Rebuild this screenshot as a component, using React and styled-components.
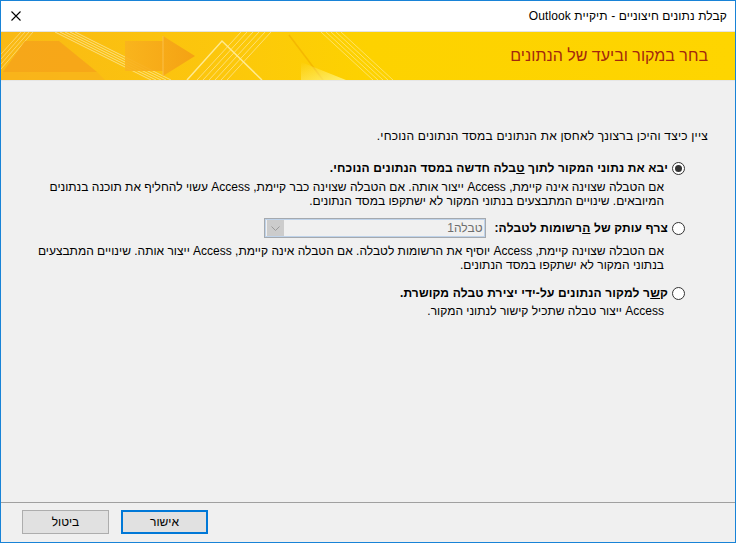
import React from 'react';
import styled, { createGlobalStyle } from 'styled-components';

const Global = createGlobalStyle`
  html, body { margin: 0; padding: 0; background: #f0f0f0; overflow: hidden; }
  body { font-family: "Liberation Sans", "DejaVu Sans", Arial, sans-serif; }
`;

const FONT = `"Liberation Sans", "DejaVu Sans", Arial, sans-serif`;

const Window = styled.div`
  width: 736px;
  height: 543px;
  box-sizing: border-box;
  border: 1px solid #1883d7;
  display: flex;
  flex-direction: column;
  background: #f0f0f0;
  direction: rtl;
  font-family: ${FONT};
  font-size: 12px;
  color: #000;
  overflow: hidden;
`;

const TitleBar = styled.div`
  height: 30px;
  flex-shrink: 0;
  background: #fff;
  display: flex;
  align-items: center;
  justify-content: space-between;
  padding: 0 8px 1px 10px;
  box-sizing: border-box;
`;

const TitleText = styled.span`
  font-size: 12px;
  color: #000;
  white-space: nowrap;
  letter-spacing: 0.1px;
`;

const CloseBtn = styled.span`
  display: flex;
  width: 10px;
  height: 10px;
`;

const Banner = styled.div`
  position: relative;
  height: 48px;
  flex-shrink: 0;
  border-top: 1px solid #e4e4e4;
  border-bottom: 1px solid #e6e6e6;
  display: flex;
  align-items: center;
  padding-right: 27px;
  overflow: hidden;
  background: #fdd300;
`;

const BannerArt = styled.svg`
  position: absolute;
  inset: 0;
  width: 100%;
  height: 100%;
`;

const BannerTitle = styled.h1`
  position: relative;
  margin: 0;
  font-size: 16px;
  font-weight: normal;
  color: #a3280d;
  white-space: nowrap;
`;

const Body = styled.div`
  flex: 1;
  padding: 48px 27px 0 0;
`;

const Line = styled.div`
  line-height: 14px;
  white-space: nowrap;
  letter-spacing: ${p => p.$ls || 0}px;
`;

const Options = styled.div`
  margin-top: 15px;
  padding-right: 23px;
  display: flex;
  flex-direction: column;
`;

const Option = styled.div`
  margin-top: ${p => p.$gap || 0}px;
`;

const Row = styled.div`
  display: flex;
  align-items: center;
  min-height: 20px;
  gap: 4px;
`;

const Radio = styled.span`
  width: 13px;
  height: 13px;
  box-sizing: border-box;
  border: 1px solid #333;
  border-radius: 50%;
  background: #fff;
  display: grid;
  place-items: center;
  flex-shrink: 0;
  &::after {
    content: '';
    width: 7px;
    height: 7px;
    border-radius: 50%;
    background: ${p => (p.$checked ? '#333' : 'transparent')};
  }
`;

const Label = styled.span`
  font-weight: bold;
  white-space: nowrap;
  line-height: 14px;
  letter-spacing: 0.15px;
`;

const Accel = styled.u`
  text-decoration: underline;
`;

const Desc = styled.div`
  margin-top: ${p => p.$top || 0}px;
  margin-right: 21px;
`;

const Combo = styled.div`
  margin-right: 4px;
  width: 222px;
  height: 20px;
  box-sizing: border-box;
  border: 1px solid #a5a9ae;
  box-shadow: inset 0 0 0 1px #bfd3ea;
  background: #f0f0f0;
  display: flex;
  align-items: center;
  padding: 1px 3px 1px 2px;
`;

const ComboText = styled.span`
  flex: 1;
  color: #6d6d6d;
  white-space: nowrap;
`;

const ComboBtn = styled.span`
  width: 17px;
  height: 16px;
  background: #cccccc;
  display: grid;
  place-items: center;
`;

const Footer = styled.div`
  flex-shrink: 0;
  border-top: 1px solid #a0a0a0;
  padding: 7px 21px 8px;
  display: flex;
  justify-content: flex-end;
  gap: 12px;
`;

const Button = styled.button`
  width: 87px;
  height: 24px;
  box-sizing: border-box;
  background: #e1e1e1;
  border: ${p => (p.$primary ? '2px solid #0078d7' : '1px solid #adadad')};
  font-family: ${FONT};
  font-size: 12px;
  color: #000;
  padding: 0;
  margin: 0;
`;

function Art() {
  return (
    <BannerArt viewBox="0 0 734 48" preserveAspectRatio="none">
      <defs>
        <linearGradient id="bg" x1="0" y1="0" x2="1" y2="0">
          <stop offset="0" stopColor="#f9b915" />
          <stop offset="0.3" stopColor="#fcc70c" />
          <stop offset="0.5" stopColor="#fdd200" />
          <stop offset="1" stopColor="#fed500" />
        </linearGradient>
        <linearGradient id="arrow" x1="0" y1="0" x2="1" y2="0">
          <stop offset="0" stopColor="#f9b31e" />
          <stop offset="1" stopColor="#f49e14" />
        </linearGradient>
        <linearGradient id="glow" x1="0" y1="0" x2="1" y2="1">
          <stop offset="0" stopColor="#fff27a" stopOpacity="0" />
          <stop offset="1" stopColor="#fff27a" stopOpacity="0.9" />
        </linearGradient>
      </defs>
      <rect width="734" height="48" fill="url(#bg)" />
      <g stroke="#ffe08a" strokeWidth="1" opacity="0.7">
        <line x1="0" y1="22" x2="20" y2="0" />
        <line x1="0" y1="27" x2="24" y2="0" />
        <line x1="0" y1="32" x2="28" y2="0" />
        <line x1="0" y1="37" x2="32" y2="0" />
      </g>
      <polygon points="2,40 24,9 58,9 96,40" fill="#f6a31a" opacity="0.85" />
      <polygon points="0,48 2,40 96,40 104,48" fill="#f8b01e" opacity="0.6" />
      <g stroke="#fff1b8" strokeWidth="1" opacity="0.65">
        <line x1="54" y1="0" x2="150" y2="48" />
        <line x1="59" y1="0" x2="155" y2="48" />
        <line x1="64" y1="0" x2="160" y2="48" />
        <line x1="69" y1="0" x2="165" y2="48" />
        <line x1="74" y1="0" x2="170" y2="48" />
      </g>
      <polygon points="124,9 162,9 162,4 194,24 162,44 162,39 124,39" fill="url(#arrow)" opacity="0.9" />
      <line x1="162" y1="4" x2="162" y2="44" stroke="#fbc04a" strokeWidth="1" />
      <polyline points="186,48 221,9 261,48" fill="none" stroke="#fff3b0" strokeWidth="1.5" opacity="0.8" />
      <g stroke="#ffe9a0" strokeWidth="1" opacity="0.7">
        <line x1="240" y1="0" x2="196" y2="48" />
        <line x1="246" y1="0" x2="202" y2="48" />
        <line x1="252" y1="0" x2="208" y2="48" />
        <line x1="258" y1="0" x2="214" y2="48" />
        <line x1="264" y1="0" x2="220" y2="48" />
        <line x1="270" y1="0" x2="226" y2="48" />
      </g>
      <line x1="288" y1="3" x2="322" y2="48" stroke="#f2b000" strokeWidth="1.5" opacity="0.7" />
      <polygon points="300,30 345,48 300,48" fill="url(#glow)" />
      <g stroke="#ffeb8c" strokeWidth="1" opacity="0.7">
        <line x1="320" y1="0" x2="372" y2="48" />
        <line x1="325" y1="0" x2="377" y2="48" />
        <line x1="330" y1="0" x2="382" y2="48" />
        <line x1="335" y1="0" x2="387" y2="48" />
        <line x1="340" y1="0" x2="392" y2="48" />
      </g>
    </BannerArt>
  );
}

export default function App() {
  return (
    <>
      <Global />
      <Window>
        <TitleBar>
          <TitleText>קבלת נתונים חיצוניים - תיקיית Outlook</TitleText>
          <CloseBtn>
            <svg width="10" height="10" viewBox="0 0 10 10">
              <path d="M0.5 0.5 L9.5 9.5 M9.5 0.5 L0.5 9.5" stroke="#000" strokeWidth="1.1" fill="none" />
            </svg>
          </CloseBtn>
        </TitleBar>
        <Banner>
          <Art />
          <BannerTitle>בחר במקור וביעד של הנתונים</BannerTitle>
        </Banner>
        <Body>
          <Line $ls={0.2}>ציין כיצד והיכן ברצונך לאחסן את הנתונים במסד הנתונים הנוכחי.</Line>
          <Options>
            <Option>
              <Row>
                <Radio $checked />
                <Label>
                  יבא את נתוני המקור לתוך <Accel>ט</Accel>בלה חדשה במסד הנתונים הנוכחי.
                </Label>
              </Row>
              <Desc $top={2}>
                <Line>אם הטבלה שצוינה אינה קיימת, Access ייצור אותה. אם הטבלה שצוינה כבר קיימת, Access עשוי להחליף את תוכנה בנתונים</Line>
                <Line>המיובאים. שינויים המתבצעים בנתוני המקור לא ישתקפו במסד הנתונים.</Line>
              </Desc>
            </Option>
            <Option $gap={10}>
              <Row>
                <Radio />
                <Label>
                  צרף עותק של <Accel>ה</Accel>רשומות לטבלה:
                </Label>
                <Combo>
                  <ComboText>טבלה1</ComboText>
                  <ComboBtn>
                    <svg width="9" height="5" viewBox="0 0 9 5">
                      <path d="M0.5 0.5 L4.5 4.5 L8.5 0.5" stroke="#9a9a9a" fill="none" strokeWidth="1" />
                    </svg>
                  </ComboBtn>
                </Combo>
              </Row>
              <Desc $top={6}>
                <Line>אם הטבלה שצוינה קיימת, Access יוסיף את הרשומות לטבלה. אם הטבלה אינה קיימת, Access ייצור אותה. שינויים המתבצעים</Line>
                <Line>בנתוני המקור לא ישתקפו במסד הנתונים.</Line>
              </Desc>
            </Option>
            <Option $gap={11}>
              <Row>
                <Radio />
                <Label>
                  ק<Accel>ש</Accel>ר למקור הנתונים על-ידי יצירת טבלה מקושרת.
                </Label>
              </Row>
              <Desc $top={1}>
                <Line>Access ייצור טבלה שתכיל קישור לנתוני המקור.</Line>
              </Desc>
            </Option>
          </Options>
        </Body>
        <Footer>
          <Button $primary>אישור</Button>
          <Button>ביטול</Button>
        </Footer>
      </Window>
    </>
  );
}
